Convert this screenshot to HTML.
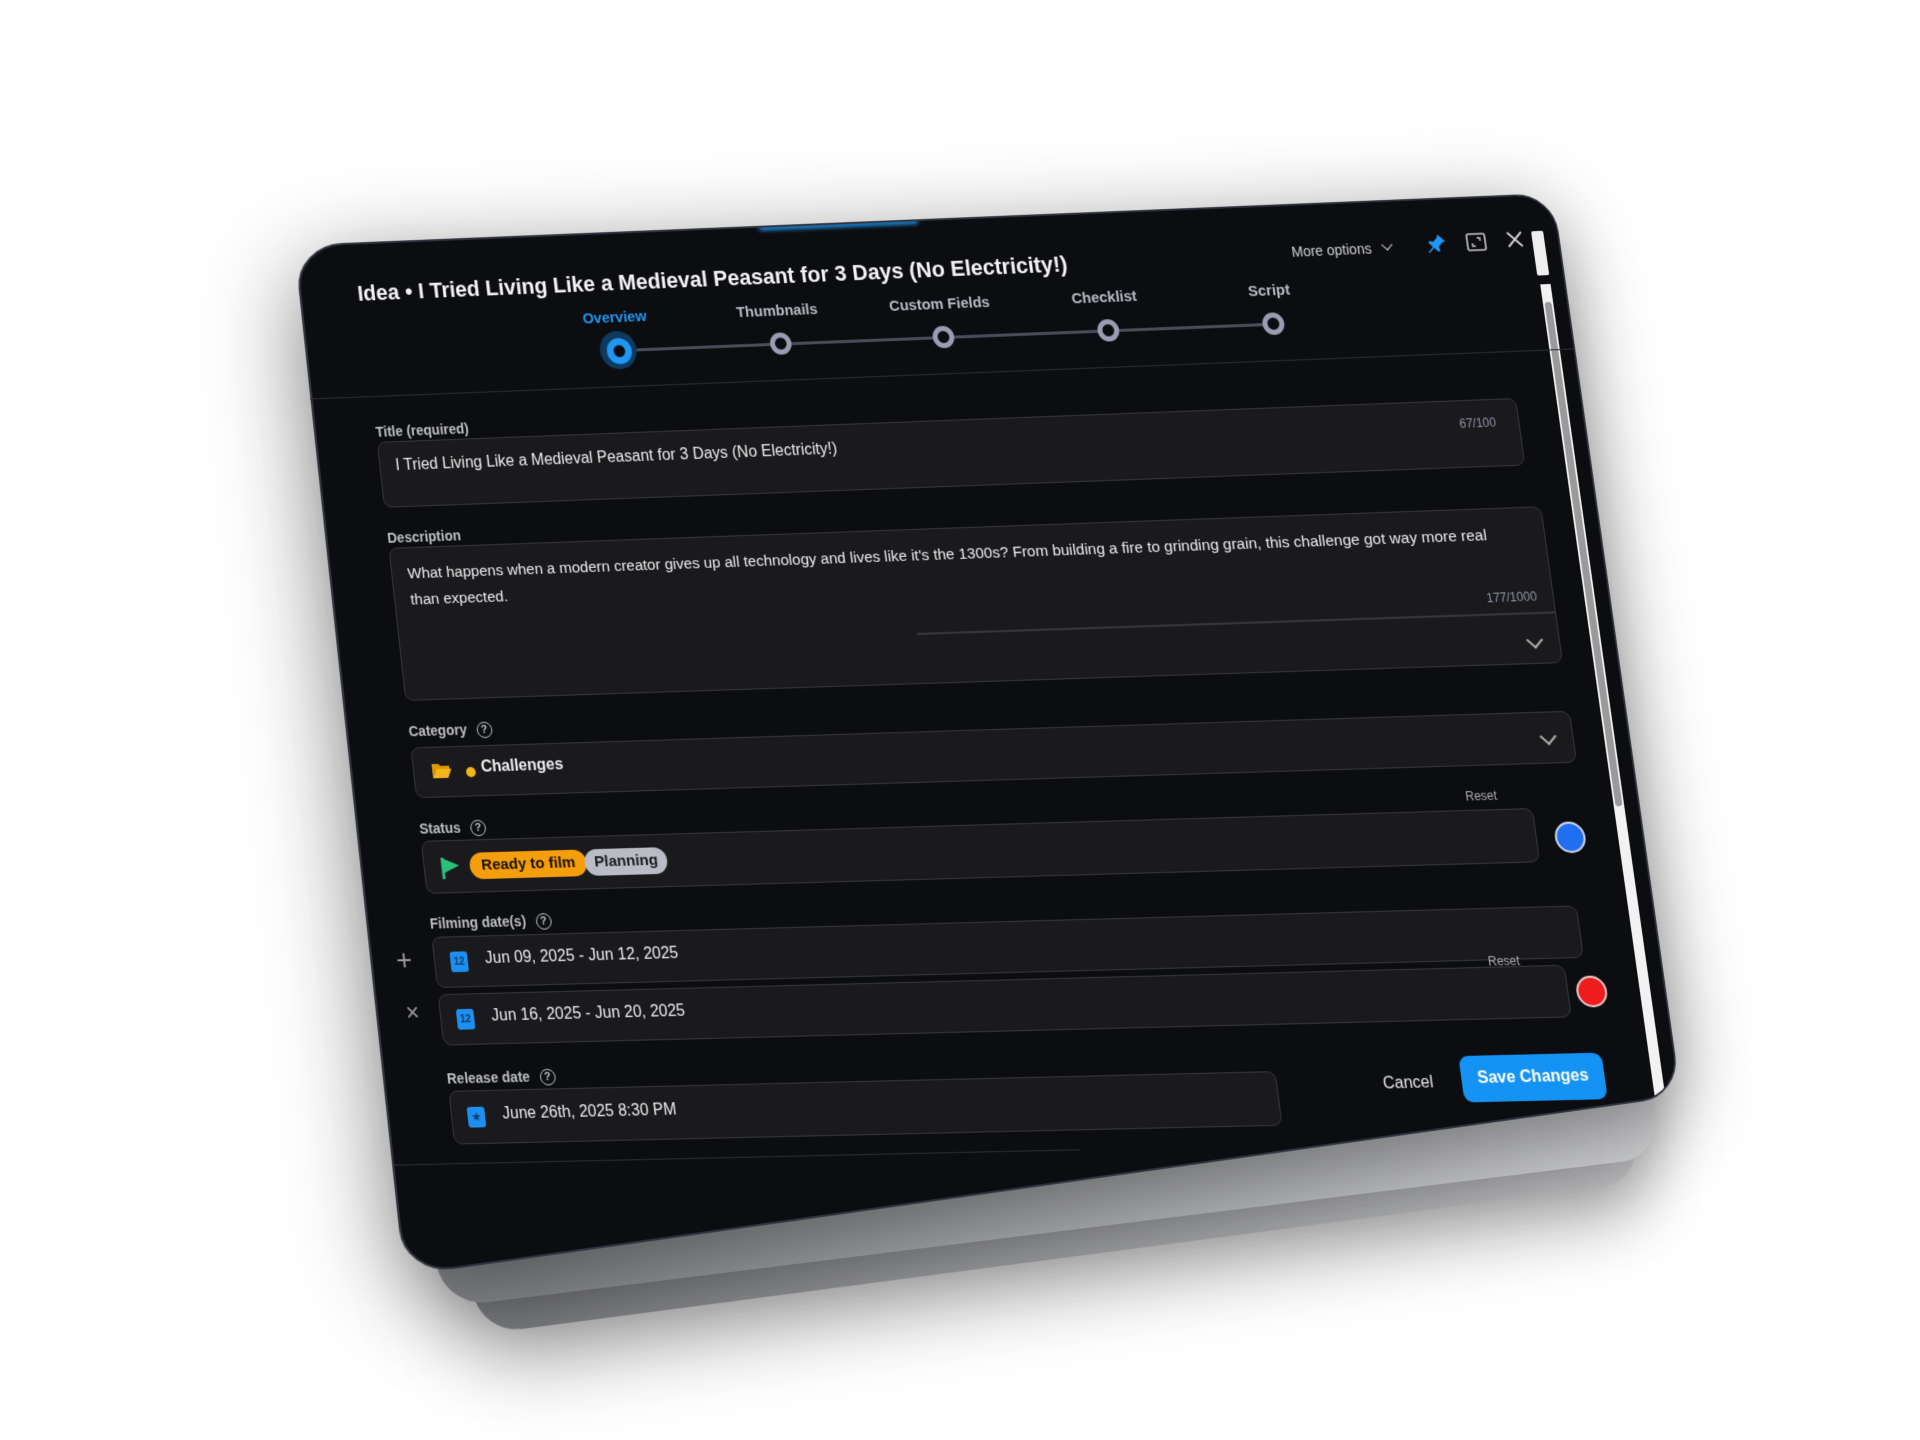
<!DOCTYPE html>
<html><head><meta charset="utf-8">
<style>
html,body{margin:0;padding:0;width:1920px;height:1440px;background:#fff;overflow:hidden;font-family:"Liberation Sans",sans-serif}
.q{position:absolute;left:0;top:0;width:1300px;height:1000px;transform-origin:0 0;border-radius:44px;box-sizing:border-box}
.layer{background:linear-gradient(100deg,#7d7f84 0%,#a9abae 50%,#d2d3d5 100%);box-shadow:0 30px 80px rgba(0,0,0,.25)}
#panel{background:#0c0d10;border:2px solid #30343f;box-shadow:0 20px 90px rgba(0,0,0,.45);overflow:hidden}
#content{color:#e8e8ea;border-radius:0}
.abs{position:absolute}
.glow{left:440px;top:-2px;width:160px;height:5px;background:#1b8fe6;filter:blur(2px)}
.title{left:62px;top:34px;font-size:22px;font-weight:bold;color:#f2f2f4}
.step{font-size:15px;font-weight:bold;color:#b8bac4;text-align:center;width:140px}
.dot{width:12px;height:12px;border:5px solid #9a9cb4;border-radius:50%;background:#0c0d10}
.line{height:3px;background:#4a4c5c}
.lab{font-size:14px;font-weight:bold;color:#bdbec4;left:65px}
.box{background:#1a1a1c;border:1.5px solid #36373c;border-radius:9px;box-sizing:border-box}
.txt{font-size:16px;color:#ececee}
.cnt{font-size:12px;color:#8f93a8}
.help{display:inline-block;width:14px;height:14px;border:1.5px solid #bdbec4;border-radius:50%;font-size:11px;text-align:center;line-height:14px;margin-left:10px;vertical-align:middle}
.chev{width:10px;height:10px;border-right:2px solid #aaa;border-bottom:2px solid #aaa;transform:rotate(45deg)}
.cal{width:18px;height:20px;background:#1e8ff0;border-radius:3px;color:#0b3d6e;font-size:10px;font-weight:bold;text-align:center;line-height:22px}
</style></head><body>
<div class="q layer" id="l3"></div>
<div class="q layer" id="l2"></div>
<div class="q" id="panel">
  <div class="abs glow"></div>
  <div class="abs" style="left:1266px;top:40px;width:14px;height:50px;background:#eee;border-radius:2px"></div>
  <div class="abs" style="left:1268px;top:100px;width:12px;height:900px;background:#f2f2f2"></div>
  <div class="abs" style="left:1270px;top:120px;width:8px;height:560px;background:#9a9a9a;border-radius:4px"></div>
</div>
<div class="q" id="content">
  <div class="abs title">Idea • I Tried Living Like a Medieval Peasant for 3 Days (No Electricity!)</div>
  <div class="abs" style="left:1030px;top:36px;font-size:14px;color:#cfd0d6">More options <span style="display:inline-block;width:7px;height:7px;border-right:1.5px solid #ccc;border-bottom:1.5px solid #ccc;transform:rotate(45deg);margin:0 0 4px 8px"></span></div>
  <svg class="abs" style="left:1165px;top:30px" width="24" height="24" viewBox="0 0 24 24"><path d="M14 3l7 7-3 1-4 4 1 4-2 1-4-4-5 5-1-1 5-5-4-4 1-2 4 1 4-4z" fill="#1e96f2"/></svg>
  <svg class="abs" style="left:1206px;top:31px" width="22" height="22" viewBox="0 0 22 22"><rect x="2" y="3" width="18" height="16" rx="2" fill="none" stroke="#c8c8cc" stroke-width="1.6"/><path d="M12 7h3v3M10 15H7v-3" stroke="#c8c8cc" stroke-width="1.4" fill="none"/></svg>
  <svg class="abs" style="left:1246px;top:31px" width="20" height="20" viewBox="0 0 20 20"><path d="M3 3l14 14M17 3L3 17" stroke="#d0d0d4" stroke-width="1.8"/></svg>

  <div class="abs step" style="left:258px;top:73px;color:#1e96f2">Overview</div>
  <div class="abs step" style="left:427px;top:73px">Thumbnails</div>
  <div class="abs step" style="left:595px;top:73px">Custom Fields</div>
  <div class="abs step" style="left:764px;top:73px">Checklist</div>
  <div class="abs step" style="left:932px;top:73px">Script</div>
  <div class="abs line" style="left:335px;top:113px;width:665px"></div>
  <div class="abs" style="left:309px;top:95px;width:38px;height:38px;border-radius:50%;background:#0d3a5e"></div>
  <div class="abs dot" style="left:316px;top:102px;width:12px;height:12px;border:7px solid #1e96f2"></div>
  <div class="abs" style="left:486px;top:103px"><div class="dot"></div></div>
  <div class="abs" style="left:654px;top:103px"><div class="dot"></div></div>
  <div class="abs" style="left:823px;top:103px"><div class="dot"></div></div>
  <div class="abs" style="left:991px;top:103px"><div class="dot"></div></div>
  <div class="abs" style="left:0;top:150px;width:1300px;height:1px;background:#2a2c33"></div>

  <div class="abs lab" style="top:178px">Title (required)</div>
  <div class="abs box" style="left:65px;top:196px;width:1170px;height:66px"></div>
  <div class="abs txt" style="left:82px;top:212px">I Tried Living Like a Medieval Peasant for 3 Days (No Electricity!)</div>
  <div class="abs cnt" style="left:1175px;top:212px">67/100</div>

  <div class="abs lab" style="top:284px">Description</div>
  <div class="abs box" style="left:65px;top:302px;width:1180px;height:152px"></div>
  <div class="abs txt" style="left:82px;top:316px;width:1110px;line-height:26px;font-size:15.5px">What happens when a modern creator gives up all technology and lives like it's the 1300s? From building a fire to grinding grain, this challenge got way more real than expected.</div>
  <div class="abs cnt" style="left:1178px;top:382px">177/1000</div>
  <div class="abs" style="left:600px;top:404px;width:645px;height:1.5px;background:#36373c"></div>
  <div class="abs chev" style="left:1214px;top:425px"></div>

  <div class="abs lab" style="top:476px">Category<span class="help">?</span></div>
  <div class="abs box" style="left:65px;top:500px;width:1180px;height:50px"></div>
  <svg class="abs" style="left:84px;top:514px" width="22" height="18" viewBox="0 0 22 18"><path d="M1 3h7l2 2h9v3H5L1 17z" fill="#d99a00"/><path d="M5 8h16l-4 9H1z" fill="#f5b41a"/></svg>
  <div class="abs" style="left:120px;top:521px;width:10px;height:10px;border-radius:50%;background:#f5b41a"></div>
  <div class="abs txt" style="left:136px;top:513px;font-weight:bold">Challenges</div>
  <div class="abs chev" style="left:1214px;top:518px"></div>

  <div class="abs lab" style="top:572px">Status<span class="help">?</span></div>
  <div class="abs" style="left:1130px;top:572px;font-size:12px;color:#aaa">Reset</div>
  <div class="abs box" style="left:65px;top:592px;width:1130px;height:52px"></div>
  <svg class="abs" style="left:82px;top:607px" width="22" height="24" viewBox="0 0 22 24"><path d="M3 2v21" stroke="#2dbf7a" stroke-width="3"/><path d="M4 3l16 7-16 7z" fill="#2dbf7a"/></svg>
  <div class="abs" style="left:113px;top:605px;background:#f59e0b;color:#1a1200;font-weight:bold;font-size:15.5px;padding:4px 12px;border-radius:14px">Ready to film</div>
  <div class="abs" style="left:232px;top:605px;background:#b9bcc6;color:#1a1a1e;font-weight:bold;font-size:15.5px;padding:4px 10px;border-radius:14px">Planning</div>
  <div class="abs" style="left:1213px;top:606px;width:26px;height:26px;border-radius:50%;background:#1f6ff0;border:2px solid #cfd6ea"></div>

  <div class="abs lab" style="top:665px">Filming date(s)<span class="help">?</span></div>
  <div class="abs" style="left:26px;top:692px;font-size:28px;color:#999">+</div>
  <div class="abs box" style="left:65px;top:686px;width:1160px;height:50px"></div>
  <div class="abs cal" style="left:82px;top:701px">12</div>
  <div class="abs txt" style="left:118px;top:700px">Jun 09, 2025 - Jun 12, 2025</div>
  <div class="abs" style="left:30px;top:746px;font-size:24px;color:#999">×</div>
  <div class="abs" style="left:1130px;top:730px;font-size:12px;color:#aaa">Reset</div>
  <div class="abs box" style="left:65px;top:742px;width:1140px;height:50px"></div>
  <div class="abs cal" style="left:82px;top:757px">12</div>
  <div class="abs txt" style="left:118px;top:756px">Jun 16, 2025 - Jun 20, 2025</div>
  <div class="abs" style="left:1213px;top:753px;width:26px;height:26px;border-radius:50%;background:#ee1c1c;border:2px solid #e8c8c8"></div>

  <div class="abs lab" style="top:816px">Release date<span class="help">?</span></div>
  <div class="abs box" style="left:65px;top:836px;width:840px;height:52px"></div>
  <div class="abs cal" style="left:82px;top:852px">★</div>
  <div class="abs txt" style="left:118px;top:851px">June 26th, 2025 8:30 PM</div>
  <div class="abs" style="left:1010px;top:842px;font-size:16px;color:#e4e4e8">Cancel</div>
  <div class="abs" style="left:1088px;top:826px;background:#1493f5;color:#fff;font-weight:bold;font-size:16px;padding:13px 16px;border-radius:9px">Save Changes</div>
  <div class="abs" style="left:0;top:906px;width:700px;height:1px;background:#2a2c33"></div>
</div>
<script>
function H(el,p){var W=1300,Hh=1000;
var x0=p[0][0],y0=p[0][1],x1=p[1][0],y1=p[1][1],x2=p[2][0],y2=p[2][1],x3=p[3][0],y3=p[3][1];
var dx1=x1-x2,dx2=x3-x2,dx3=x0-x1+x2-x3,dy1=y1-y2,dy2=y3-y2,dy3=y0-y1+y2-y3;
var den=dx1*dy2-dx2*dy1;var g=(dx3*dy2-dx2*dy3)/den,h=(dx1*dy3-dx3*dy1)/den;
var a=x1-x0+g*x1,b=x3-x0+h*x3,c=x0,d=y1-y0+g*y1,e=y3-y0+h*y3,f=y0;
el.style.transform="matrix3d("+[a/W,d/W,0,g/W,b/Hh,e/Hh,0,h/Hh,0,0,1,0,c,f,0,1].join(",")+")";}
H(document.getElementById('panel'),[[294,245],[1553,193],[1681,1096],[404,1276]]);
H(document.getElementById('content'),[[294,250],[1553,196],[1700,1236],[404,1262]]);
H(document.getElementById('l2'),[[331,277],[1531,254],[1659,1157],[441,1308]]);
H(document.getElementById('l3'),[[367,304],[1513,279],[1641,1182],[477,1335]]);
</script>
</body></html>
